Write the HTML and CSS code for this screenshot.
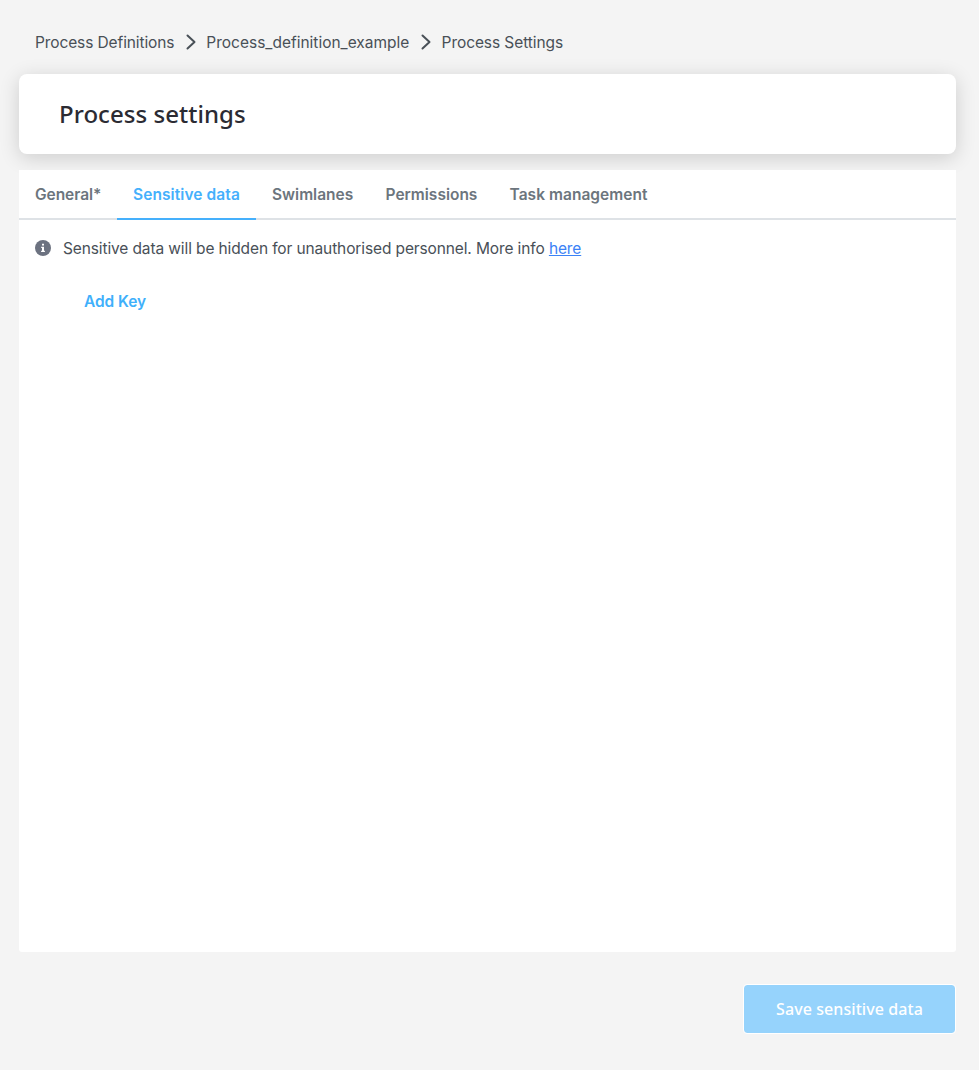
FILE: index.html
```html
<!DOCTYPE html>
<html lang="en">
<head>
<meta charset="utf-8">
<title>Process settings</title>
<link rel="stylesheet" href="styles.css">
</head>
<body>
<nav class="breadcrumb">
  <span class="crumb crumb-root">Process Definitions</span>
  <svg class="chevron" viewBox="0 0 10 16"><path d="M1.500 1.500 8.500 8l-7 6.500"/></svg>
  <span class="crumb crumb-process">Process_definition_example</span>
  <svg class="chevron" viewBox="0 0 10 16"><path d="M1.500 1.500 8.500 8l-7 6.500"/></svg>
  <span class="crumb crumb-current">Process Settings</span>
</nav>
<header class="title-card"><h1>Process settings</h1></header>
<main class="panel">
  <div class="tabs">
    <a class="tab tab-general">General*</a>
    <a class="tab tab-sensitive active">Sensitive data</a>
    <a class="tab tab-swimlanes">Swimlanes</a>
    <a class="tab tab-permissions">Permissions</a>
    <a class="tab tab-tasks">Task management</a>
  </div>
  <div class="info">
    <svg class="info-icon" viewBox="0 0 16 16"><circle cx="8" cy="8" r="8"/><path d="M7 3.700h2v1.900H7zM6.200 6.700H9v4h.9V12H6.100v-1.300H7V8h-.8z"/></svg>
    <p>Sensitive data will be hidden for unauthorised personnel. More info <a class="link" href="#">here</a></p>
  </div>
  <button class="add-key">Add Key</button>
</main>
<footer class="footer"><button class="save">Save sensitive data</button></footer>
</body>
</html>
```
FILE: styles.css
```css
* { box-sizing: border-box; }
body { margin: 0; padding: 30px 23px 0 19px; height: 1070px; background: #f4f4f4; font: 15.5px/24px Inter, sans-serif; color: #495057; }
.breadcrumb { display: flex; align-items: center; height: 24px; padding-left: 16px; white-space: nowrap; }
.crumb { padding-top: 2px; }
.crumb-root { width: 139.500px; letter-spacing: -0.11px; }
.crumb-process { width: 203.500px; letter-spacing: 0; }
.crumb-current { letter-spacing: -0.08px; }
.chevron { width: 10px; height: 16px; margin: 0 10.5px 0 11.3px; flex: none; fill: none; stroke: #495057; stroke-width: 2; stroke-linecap: round; stroke-linejoin: round; }
.title-card { height: 80px; margin-top: 20px; padding: 24px 40px; background: #fff; border-radius: 8px; box-shadow: 0 4px 20px rgba(0,0,0,.16); }
h1 { margin: 0; font: 500 24px/32px "Noto Sans", sans-serif; letter-spacing: 0.04px; color: #2b2b33; }
.panel { position: relative; height: 782px; margin-top: 16px; background: #fff; border-radius: 0 0 3px 3px; }
.tabs { display: flex; height: 50px; border-bottom: 2px solid #dee2e6; }
.tab { height: 50px; padding: 13px 0 0 16px; border-bottom: 2px solid transparent; font-weight: 600; white-space: nowrap; color: #6c757d; }
.tab-general { width: 98px; letter-spacing: -0.05px; }
.tab-sensitive { width: 139px; letter-spacing: 0.09px; }
.tab-swimlanes { width: 113.500px; letter-spacing: 0; }
.tab-permissions { width: 124px; letter-spacing: 0; }
.tab-tasks { width: 170px; letter-spacing: 0.04px; }
.tab.active { color: #45b0fc; border-color: #45b0fc; }
.info { display: flex; align-items: center; gap: 12px; height: 24px; margin: 16px 16px 0; letter-spacing: -0.12px; }
.info p { margin: 0; padding-top: 2px; white-space: nowrap; }
.info-icon { width: 16px; height: 16px; fill: #6c7280; }
.info-icon path { fill: #fff; }
.link { color: #3b82f6; text-underline-offset: 1px; }
button { border: 0; cursor: pointer; }
.add-key { display: block; margin: 30px 0 0 65px; padding: 0; background: none; font: 600 15.5px/24px Inter, sans-serif; letter-spacing: -0.08px; color: #3fb0fb; }
.footer { display: flex; justify-content: flex-end; margin-top: 32px; }
.save { width: 213px; height: 50px; padding: 0; border: 1px solid #fff; border-radius: 4px; background: #96d3fc; background-clip: padding-box; font: 500 16px/24px "Noto Sans", sans-serif; letter-spacing: 0.08px; color: #fff; }
```
